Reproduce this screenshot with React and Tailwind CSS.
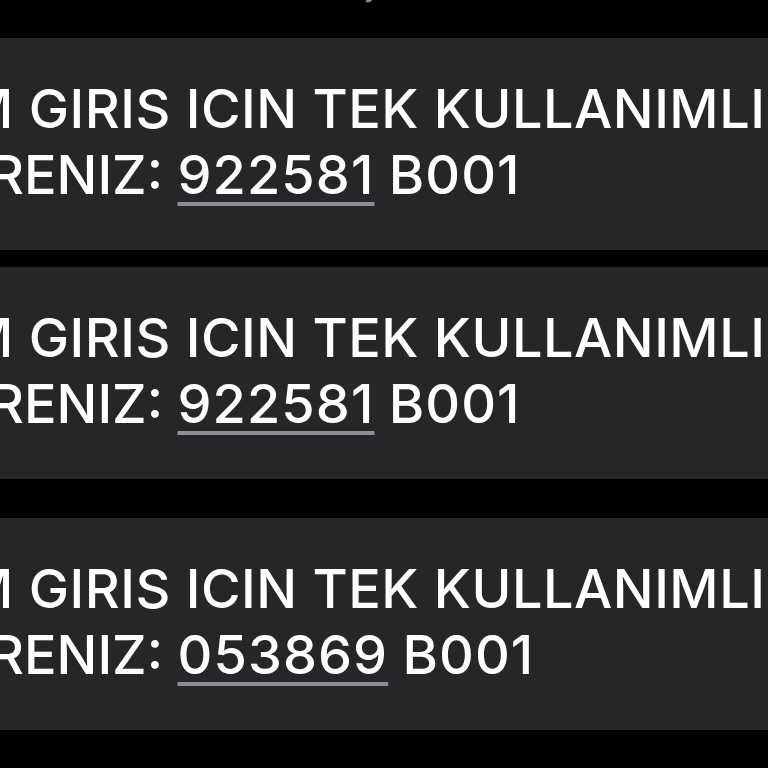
const messages = [
  { code: "922581", gap: "mt-[17px]" },
  { code: "922581", gap: "mt-[17px]" },
  { code: "053869", gap: "mt-[39px]" },
];

function Bubble({ code, className }) {
  return (
    <div
      className={
        "h-[212px] overflow-hidden whitespace-nowrap bg-[#262629] pt-[38px] text-[54px] font-medium leading-[66px] text-white " +
        className
      }
    >
      <div className="-ml-[36px] tracking-[0.5px]">M GIRIS ICIN TEK KULLANIMLIK</div>
      <div className="-ml-[11px]">
        RENIZ:{" "}
        <span className="tracking-[1.1px] underline decoration-[#8d8d92] decoration-[4px] underline-offset-[8px]">
          {code}
        </span>{" "}
        <span className="tracking-[1px]">B001</span>
      </div>
    </div>
  );
}

export default function App() {
  return (
    <div className="h-[768px] w-[768px] overflow-hidden bg-black font-['Inter','Liberation_Sans',sans-serif]">
      <div className="h-[21px] overflow-hidden">
        <div className="-mt-[33px] pl-[294px] text-[30px] leading-[36px] text-[#8e8e93]">Today 09:41</div>
      </div>
      {messages.map((m, i) => (
        <Bubble key={i} code={m.code} className={i === 0 ? "mt-[17px]" : m.gap} />
      ))}
    </div>
  );
}
